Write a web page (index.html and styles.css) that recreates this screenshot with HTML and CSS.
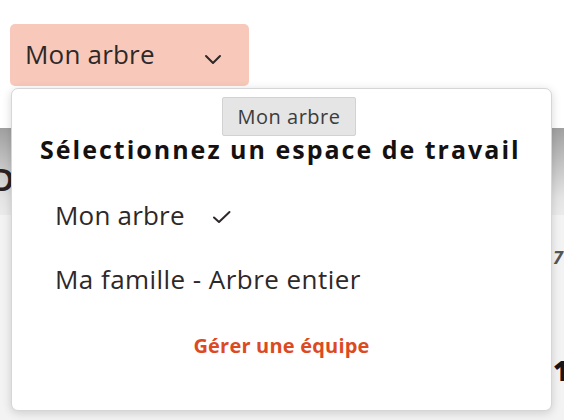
FILE: index.html
```html
<!DOCTYPE html>
<html lang="fr">
<head>
<meta charset="utf-8">
<title>Espace de travail</title>
<link rel="stylesheet" href="styles.css">
</head>
<body>
<div class="page">
  <header class="topbar">
    <div class="switcher">
      <button class="switch-btn" type="button">
        <span class="switch-label">Mon arbre</span>
        <svg class="chevron" width="18" height="11" viewBox="0 0 18 11"><path d="M2 2 L9 9 L16 2" fill="none" stroke="#2e2828" stroke-width="2" stroke-linecap="round" stroke-linejoin="round"/></svg>
      </button>
      <div class="menu">
        <h2 class="menu-title">Sélectionnez un espace de travail</h2>
        <ul class="menu-list">
          <li class="menu-item">Mon arbre
            <svg class="check" width="20" height="14" viewBox="0 0 20 14"><path d="M2 7.5 L7 12 L17.5 2" fill="none" stroke="#2e2828" stroke-width="2" stroke-linecap="round" stroke-linejoin="round"/></svg>
          </li>
          <li class="menu-item menu-item-wide">Ma famille - Arbre entier</li>
        </ul>
        <a class="menu-link" href="#">Gérer une équipe</a>
      </div>
      <div class="tooltip">Mon arbre</div>
    </div>
  </header>
  <div class="toolbar"><span class="toolbar-letter">D</span></div>
  <main class="content">
    <div class="row row-a"><span class="num-light">7</span></div>
    <div class="row row-b"><span class="num-bold">1</span></div>
  </main>
</div>
</body>
</html>
```
FILE: styles.css
```css
* { box-sizing: border-box; }
html, body { margin: 0; padding: 0; }
body {
  width: 564px;
  height: 420px;
  overflow: hidden;
  font-family: "Open Sans", "Noto Sans", sans-serif;
  color: #2e2828;
  background: #f3f3f3;
}
.page { display: flex; flex-direction: column; height: 420px; }
.topbar {
  height: 128px;
  background: #fff;
  padding: 24px 0 0 10px;
}
.switcher { position: relative; width: 239px; }
.switch-btn {
  display: flex;
  align-items: center;
  justify-content: space-between;
  width: 239px;
  height: 62px;
  padding: 0 27px 0 15px;
  border: 0;
  border-radius: 5px;
  background: #f8c9ba;
  font-family: inherit;
  font-size: 26px;
  letter-spacing: 0.2px;
  color: #2e2828;
  cursor: pointer;
}
.switch-label { line-height: 30px; margin-top: -2px; }
.chevron { margin-top: 8px; }
.menu {
  position: absolute;
  top: 64px;
  left: 1px;
  width: 541px;
  height: 323px;
  background: #fff;
  border: 1px solid #d6d6d6;
  border-radius: 7px;
  box-shadow: 0 2px 10px rgba(0,0,0,0.16);
  padding: 44px 0 0 0;
  z-index: 2;
}
.menu-title {
  margin: 0 0 18px 28px;
  font-size: 25px;
  line-height: 32px;
  font-weight: 700;
  letter-spacing: 2px;
  color: #151111;
  white-space: nowrap;
}
.menu-list { list-style: none; margin: 0; padding: 0; }
.menu-item {
  display: flex;
  align-items: center;
  gap: 27px;
  height: 64px;
  line-height: 64px;
  padding-left: 43px;
  font-size: 26px;
  letter-spacing: 0.2px;
}
.menu-item-wide { letter-spacing: 0.45px; }
.check { margin-top: 4px; }
.menu-link {
  display: block;
  margin-top: 24px;
  text-align: center;
  font-size: 20px;
  line-height: 22px;
  font-weight: 700;
  letter-spacing: 0.2px;
  color: #dc4a1f;
  text-decoration: none;
}
.tooltip {
  position: absolute;
  top: 73px;
  left: 212px;
  width: 134px;
  height: 39px;
  text-align: center;
  line-height: 37px;
  background: #e5e5e5;
  border: 1px solid #d2d2d2;
  border-radius: 2px;
  font-size: 20px;
  letter-spacing: 0.5px;
  color: #3c3c3c;
  white-space: nowrap;
  z-index: 3;
}
.toolbar {
  height: 87px;
  background: linear-gradient(#a0a0a0, #e4e4e4 80%, #ebebeb);
  display: flex;
  align-items: flex-start;
  padding-top: 36px;
}
.toolbar-letter {
  margin-left: -9px;
  font-size: 32px;
  line-height: 32px;
  font-weight: 700;
  color: #2a2222;
  font-family: "Liberation Sans", sans-serif;
}
.content { flex: 1; background: #f3f3f3; display: flex; flex-direction: column; align-items: flex-end; }
.row { width: 11px; }
.row-a { margin-top: 30px; height: 40px; }
.row-b { margin-top: 66px; }
.num-light { font-size: 18px; font-weight: 700; font-style: italic; color: #555; }
.num-bold { font-size: 28px; font-weight: 800; color: #1a1414; }
```
